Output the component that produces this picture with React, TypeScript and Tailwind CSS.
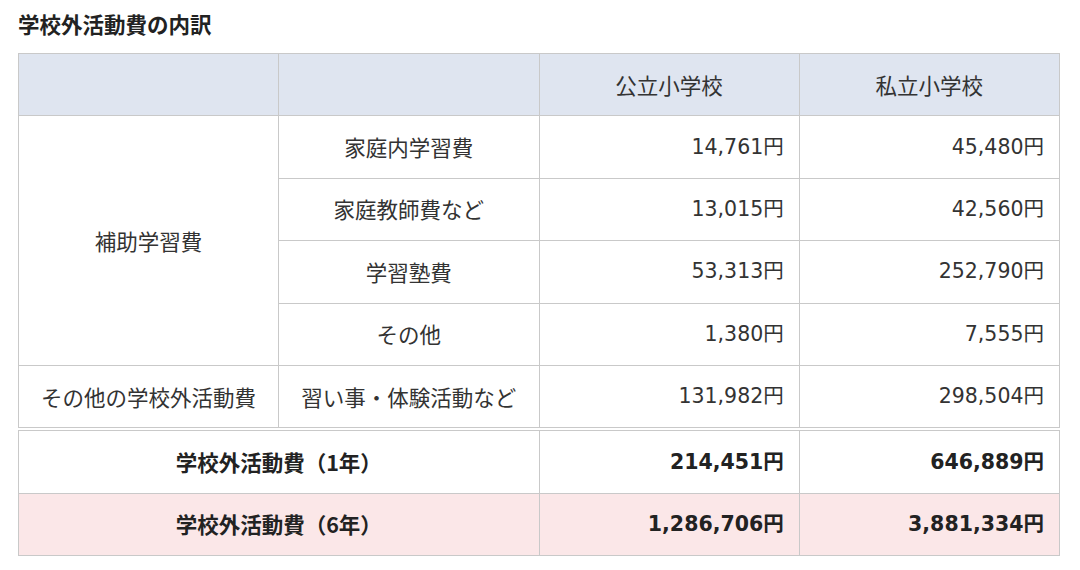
import React from "react";

const rows = [
  { sub: "家庭内学習費", a: "14,761円", b: "45,480円" },
  { sub: "家庭教師費など", a: "13,015円", b: "42,560円" },
  { sub: "学習塾費", a: "53,313円", b: "252,790円" },
  { sub: "その他", a: "1,380円", b: "7,555円" },
];

export default function App() {
  const cell = "border border-[#c9c9c9] h-[62.4px] p-0";
  const num = `${cell} text-right pr-[15px] font-['DejaVu_Sans','Noto_Sans_CJK_JP',sans-serif] text-[20.5px]`;
  return (
    <div className="w-[1080px] h-[570px] bg-white text-[#333] font-['Noto_Sans_CJK_JP',sans-serif] text-[21.5px]">
      <div className="pl-[18px] pt-[10px] text-[21.5px] leading-[28px] font-bold text-[#222]">学校外活動費の内訳</div>
      <table className="ml-[18px] mt-[15px] w-[1042px] border-collapse table-fixed">
        <tbody>
          <tr className="bg-[#dfe5f0]">
            <td className={cell}></td>
            <td className={cell}></td>
            <td className={`${cell} text-center`}>公立小学校</td>
            <td className={`${cell} text-center`}>私立小学校</td>
          </tr>
          {rows.map((r, i) => (
            <tr key={i}>
              {i === 0 && (
                <td rowSpan={4} className={`${cell} text-center`}>補助学習費</td>
              )}
              <td className={`${cell} text-center`}>{r.sub}</td>
              <td className={num}>{r.a}</td>
              <td className={num}>{r.b}</td>
            </tr>
          ))}
          <tr>
            <td className={`${cell} text-center`}>その他の学校外活動費</td>
            <td className={`${cell} text-center`}>習い事・体験活動など</td>
            <td className={num}>131,982円</td>
            <td className={num}>298,504円</td>
          </tr>
        </tbody>
      </table>
      <table className="ml-[18px] mt-[2px] w-[1042px] border-collapse table-fixed font-bold text-[#222]">
        <tbody>
          <tr>
            <td colSpan={2} className={`${cell} text-center`}>学校外活動費（1年）</td>
            <td className={num}>214,451円</td>
            <td className={num}>646,889円</td>
          </tr>
          <tr className="bg-[#fbe7e8]">
            <td colSpan={2} className={`${cell} text-center`}>学校外活動費（6年）</td>
            <td className={num}>1,286,706円</td>
            <td className={num}>3,881,334円</td>
          </tr>
        </tbody>
      </table>
    </div>
  );
}
